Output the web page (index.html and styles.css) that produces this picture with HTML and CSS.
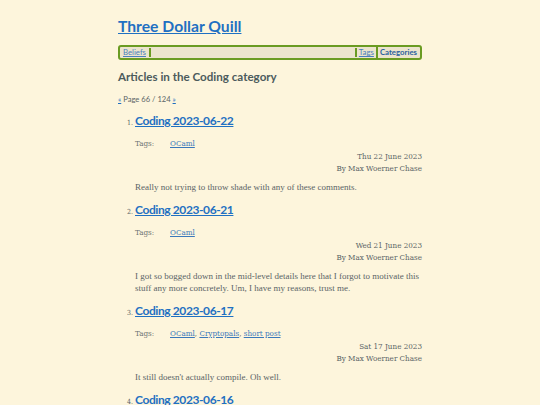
FILE: index.html
```html
<!DOCTYPE html>
<html>
<head>
<meta charset="utf-8">
<link rel="stylesheet" href="styles.css">
</head>
<body>
<div class="page">
  <header class="site-header">
    <a class="site-title" href="#">Three Dollar Quill</a>
  </header>
  <nav class="nav">
    <a class="nav-link" href="#">Beliefs</a>
    <span class="nav-fill"></span>
    <a class="nav-link" href="#">Tags</a>
    <a class="nav-link current" href="#">Categories</a>
  </nav>
  <h2 class="page-heading">Articles in the Coding category</h2>
  <p class="pager"><a href="#">«</a> Page 66 / 124 <a href="#">»</a></p>
  <ol class="articles">
    <li class="article">
      <h3 class="article-title"><a href="#">Coding 2023-06-22</a></h3>
      <div class="tags"><span class="tags-label">Tags:</span><span class="tag-list"><a href="#">OCaml</a></span></div>
      <div class="meta">Thu 22 June 2023<br>By Max Woerner Chase</div>
      <p class="summary">Really not trying to throw shade with any of these comments.</p>
    </li>
    <li class="article">
      <h3 class="article-title"><a href="#">Coding 2023-06-21</a></h3>
      <div class="tags"><span class="tags-label">Tags:</span><span class="tag-list"><a href="#">OCaml</a></span></div>
      <div class="meta">Wed 21 June 2023<br>By Max Woerner Chase</div>
      <p class="summary">I got so bogged down in the mid-level details here that I forgot to motivate this stuff any more concretely. Um, I have my reasons, trust me.</p>
    </li>
    <li class="article">
      <h3 class="article-title"><a href="#">Coding 2023-06-17</a></h3>
      <div class="tags"><span class="tags-label">Tags:</span><span class="tag-list"><a href="#">OCaml</a>, <a href="#">Cryptopals</a>, <a href="#">short post</a></span></div>
      <div class="meta">Sat 17 June 2023<br>By Max Woerner Chase</div>
      <p class="summary">It still doesn't actually compile. Oh well.</p>
    </li>
    <li class="article">
      <h3 class="article-title"><a href="#">Coding 2023-06-16</a></h3>
      <div class="tags"><span class="tags-label">Tags:</span><span class="tag-list"><a href="#">OCaml</a></span></div>
      <div class="meta">Fri 16 June 2023<br>By Max Woerner Chase</div>
    </li>
  </ol>
</div>
</body>
</html>
```
FILE: styles.css
```css
html, body {
  margin: 0;
  padding: 0;
  background: #fdf5dc;
}
body {
  font-family: "DejaVu Serif Condensed", "DejaVu Serif", serif;
  font-size: 8px;
  color: #5a6466;
}
a { color: #1f6fc0; }
.page {
  width: 304px;
  margin: 0 auto;
  padding-top: 15px;
}
.site-header {
  height: 22px;
}
.site-title {
  font-family: "Lato", sans-serif;
  font-weight: 700;
  font-size: 15.7px;
  line-height: 22px;
  color: #1f70c2;
}
.nav {
  display: flex;
  align-items: center;
  margin-top: 8px;
  height: 11px;
  border: 2px solid #6a9b22;
  border-radius: 3px;
  background: #ece4cd;
  font-family: "Lato", sans-serif;
  font-size: 7.8px;
  padding: 0 1px 0 2px;
}
.nav-link {
  color: #4a7fbd;
  padding: 0 2px 0 1px;
  line-height: 11px;
}
.nav-fill {
  flex: 1;
  align-self: stretch;
  border-left: 2px solid #6a9b22;
  border-right: 2px solid #6a9b22;
  margin: 1px;
}
.nav-link + .nav-link {
  border-left: 2px solid #6a9b22;
  padding-left: 2px;
}
.nav-link.current {
  font-weight: 700;
  color: #2a5f9e;
  text-decoration: none;
}
.page-heading {
  font-family: "Lato", sans-serif;
  font-weight: 700;
  font-size: 11.6px;
  color: #4c5b5c;
  margin: 8px 0 0;
  line-height: 18px;
}
.pager {
  font-family: "Lato", sans-serif;
  font-size: 7.6px;
  margin: 7px 0 0;
  line-height: 12px;
}
.articles {
  margin: 7px 0 0;
  padding-left: 17px;
}
.article {
  font-size: 7px;
}
.article::marker {
  color: #5a6466;
}
.article-title {
  display: inline-block;
  font-family: "Lato", sans-serif;
  font-weight: 700;
  font-size: 12px;
  letter-spacing: -0.4px;
  line-height: 18px;
  margin: 0 0 8px;
}
.article-title a { color: #1f70c2; }
.tags {
  display: flex;
  font-size: 8px;
  line-height: 12px;
  height: 12px;
  margin-bottom: 1px;
}
.tags-label {
  width: 35px;
  color: #6c7372;
}
.tag-list a { color: #3a78bb; }
.meta {
  text-align: right;
  font-size: 8px;
  line-height: 12px;
}
.summary {
  font-family: "Liberation Serif", serif;
  font-size: 9px;
  line-height: 12px;
  margin: 6px 0 8px;
}
```
